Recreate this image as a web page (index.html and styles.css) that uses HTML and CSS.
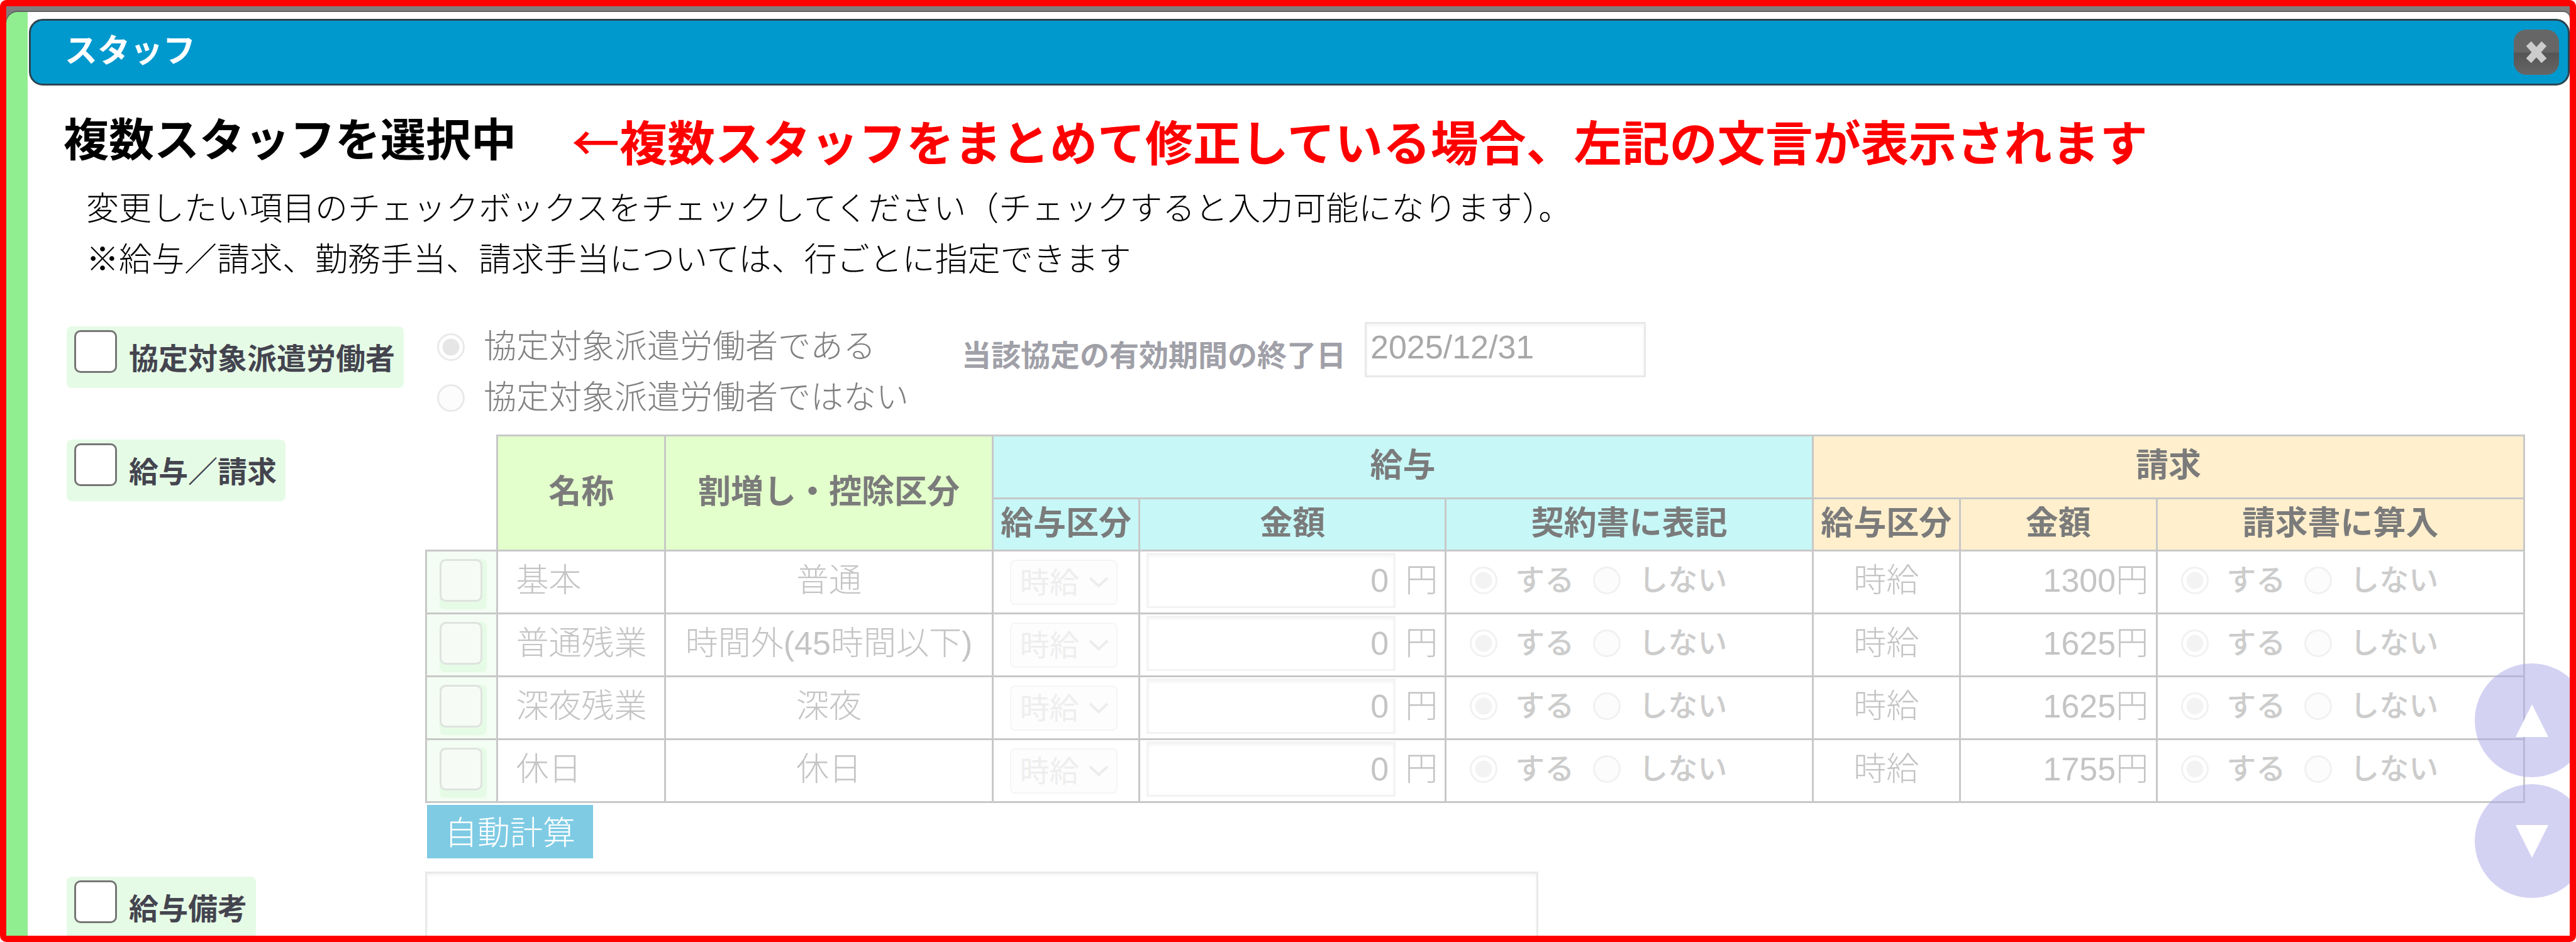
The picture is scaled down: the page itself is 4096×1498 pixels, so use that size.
FILE: index.html
```html
<!DOCTYPE html>
<html lang="ja">
<head>
    <meta charset="UTF-8">
    <title>スタッフ</title>
    <link rel="stylesheet" href="styles.css">
</head>
<body>
    <div class="frame">
        <main class="dialog">
            <header class="title-bar">
                <h1>スタッフ</h1>
                <button type="button" class="close-button" aria-label="閉じる">
                    <svg viewBox="0 0 36 36"><path d="M8 7 L28 29 M28 7 L8 29"/></svg>
                </button>
            </header>

            <div class="heading">
                <h2>複数スタッフを選択中</h2>
                <p class="annotation"><span class="arrow">←</span>複数スタッフをまとめて修正している場合、左記の文言が表示されます</p>
            </div>
            <div class="description">
                <p>変更したい項目のチェックボックスをチェックしてください（チェックすると入力可能になります）。</p>
                <p>※給与／請求、勤務手当、請求手当については、行ごとに指定できます</p>
            </div>

            <form class="staff-form">
                <div class="form-row">
                    <div class="form-head">
                        <label class="item-label"><input type="checkbox" class="check">協定対象派遣労働者</label>
                    </div>
                    <div class="form-body agreement">
                        <div class="radio-list">
                            <label><input type="radio" class="radio" name="agreement" checked disabled>協定対象派遣労働者である</label>
                            <label><input type="radio" class="radio" name="agreement" disabled>協定対象派遣労働者ではない</label>
                        </div>
                        <div class="date-field">
                            <label for="endDate">当該協定の有効期間の終了日</label>
                            <input type="text" id="endDate" class="text-box" value="2025/12/31" disabled>
                        </div>
                    </div>
                </div>

                <div class="form-row">
                    <div class="form-head">
                        <label class="item-label"><input type="checkbox" class="check">給与／請求</label>
                    </div>
                    <div class="form-body">
                        <table class="pay-table">
                            <colgroup>
                                <col class="col-check">
                                <col class="col-name">
                                <col class="col-kind">
                                <col class="col-unit">
                                <col class="col-pay">
                                <col class="col-option">
                                <col class="col-unit">
                                <col class="col-bill">
                                <col class="col-option">
                            </colgroup>
                            <thead>
                                <tr>
                                    <td class="blank" rowspan="2"></td>
                                    <th class="green" rowspan="2">名称</th>
                                    <th class="green" rowspan="2">割増し・控除区分</th>
                                    <th class="blue" colspan="3">給与</th>
                                    <th class="orange" colspan="3">請求</th>
                                </tr>
                                <tr>
                                    <th class="blue">給与区分</th>
                                    <th class="blue">金額</th>
                                    <th class="blue">契約書に表記</th>
                                    <th class="orange">給与区分</th>
                                    <th class="orange">金額</th>
                                    <th class="orange">請求書に算入</th>
                                </tr>
                            </thead>
                            <tbody>
                                <tr>
                                    <td class="row-check"><label><input type="checkbox" class="check" aria-label="基本" disabled></label></td>
                                    <td class="name">基本</td>
                                    <td class="kind">普通</td>
                                    <td class="unit"><select aria-label="給与区分" disabled><option>時給</option></select></td>
                                    <td><div class="amount"><input type="text" class="text-box" aria-label="金額" value="0" disabled>円</div></td>
                                    <td><div class="options">
                                        <label><input type="radio" class="radio" name="pay1" checked disabled>する</label>
                                        <label><input type="radio" class="radio" name="pay1" disabled>しない</label>
                                    </div></td>
                                    <td class="unit">時給</td>
                                    <td class="price">1300円</td>
                                    <td><div class="options">
                                        <label><input type="radio" class="radio" name="bill1" checked disabled>する</label>
                                        <label><input type="radio" class="radio" name="bill1" disabled>しない</label>
                                    </div></td>
                                </tr>
                                <tr>
                                    <td class="row-check"><label><input type="checkbox" class="check" aria-label="普通残業" disabled></label></td>
                                    <td class="name">普通残業</td>
                                    <td class="kind">時間外(45時間以下)</td>
                                    <td class="unit"><select aria-label="給与区分" disabled><option>時給</option></select></td>
                                    <td><div class="amount"><input type="text" class="text-box" aria-label="金額" value="0" disabled>円</div></td>
                                    <td><div class="options">
                                        <label><input type="radio" class="radio" name="pay2" checked disabled>する</label>
                                        <label><input type="radio" class="radio" name="pay2" disabled>しない</label>
                                    </div></td>
                                    <td class="unit">時給</td>
                                    <td class="price">1625円</td>
                                    <td><div class="options">
                                        <label><input type="radio" class="radio" name="bill2" checked disabled>する</label>
                                        <label><input type="radio" class="radio" name="bill2" disabled>しない</label>
                                    </div></td>
                                </tr>
                                <tr>
                                    <td class="row-check"><label><input type="checkbox" class="check" aria-label="深夜残業" disabled></label></td>
                                    <td class="name">深夜残業</td>
                                    <td class="kind">深夜</td>
                                    <td class="unit"><select aria-label="給与区分" disabled><option>時給</option></select></td>
                                    <td><div class="amount"><input type="text" class="text-box" aria-label="金額" value="0" disabled>円</div></td>
                                    <td><div class="options">
                                        <label><input type="radio" class="radio" name="pay3" checked disabled>する</label>
                                        <label><input type="radio" class="radio" name="pay3" disabled>しない</label>
                                    </div></td>
                                    <td class="unit">時給</td>
                                    <td class="price">1625円</td>
                                    <td><div class="options">
                                        <label><input type="radio" class="radio" name="bill3" checked disabled>する</label>
                                        <label><input type="radio" class="radio" name="bill3" disabled>しない</label>
                                    </div></td>
                                </tr>
                                <tr>
                                    <td class="row-check"><label><input type="checkbox" class="check" aria-label="休日" disabled></label></td>
                                    <td class="name">休日</td>
                                    <td class="kind">休日</td>
                                    <td class="unit"><select aria-label="給与区分" disabled><option>時給</option></select></td>
                                    <td><div class="amount"><input type="text" class="text-box" aria-label="金額" value="0" disabled>円</div></td>
                                    <td><div class="options">
                                        <label><input type="radio" class="radio" name="pay4" checked disabled>する</label>
                                        <label><input type="radio" class="radio" name="pay4" disabled>しない</label>
                                    </div></td>
                                    <td class="unit">時給</td>
                                    <td class="price">1755円</td>
                                    <td><div class="options">
                                        <label><input type="radio" class="radio" name="bill4" checked disabled>する</label>
                                        <label><input type="radio" class="radio" name="bill4" disabled>しない</label>
                                    </div></td>
                                </tr>
                            </tbody>
                        </table>
                        <button type="button" class="calc-button" disabled>自動計算</button>
                    </div>
                </div>

                <div class="form-row">
                    <div class="form-head">
                        <label class="item-label"><input type="checkbox" class="check">給与備考</label>
                    </div>
                    <div class="form-body">
                        <textarea class="note" aria-label="給与備考" disabled></textarea>
                    </div>
                </div>
            </form>
        </main>

        <nav class="scroll-buttons">
            <button type="button" aria-label="上へ"><svg viewBox="0 0 52 52"><path d="M26 0 L52 52 H0 Z"/></svg></button>
            <button type="button" aria-label="下へ"><svg viewBox="0 0 52 52"><path d="M0 0 H52 L26 52 Z"/></svg></button>
        </nav>
    </div>
</body>
</html>
```

FILE: styles.css
```css
* {
    box-sizing: border-box;
}

body {
    margin: 0;
    background: white;
    font-family: "Liberation Sans", "Noto Sans CJK JP", sans-serif;
    font-size: 52px;
    font-weight: 300;
    color: black;
}

h1, h2, p {
    margin: 0;
}

button, input, select, textarea {
    font: inherit;
    margin: 0;
}

.frame {
    position: relative;
    height: 100vh;
    overflow: hidden;
    border: 10px solid red;
    border-radius: 10px;
    background: #7f7f7f;
    padding-top: 9px;
}

.dialog {
    min-height: 100%;
    padding: 11px 0 0 2px;
    border-left: 34px solid lightgreen;
    border-radius: 18px 10px 0 0;
    background: white;
    box-shadow: 0 -1px 2px #444;
}

/* title bar */

.title-bar {
    display: flex;
    justify-content: space-between;
    align-items: center;
    height: 106px;
    padding: 0 14px 0 54px;
    border: 3px solid #2c4450;
    border-radius: 22px;
    background: #0099ce;
}

.title-bar h1 {
    color: white;
    font-size: 52px;
    font-weight: bold;
    line-height: 80px;
    padding-bottom: 4px;
}

.close-button {
    display: flex;
    justify-content: center;
    align-items: center;
    width: 72px;
    height: 72px;
    padding: 0;
    border: none;
    border-radius: 20px;
    background: linear-gradient(#666 50%, #555 52%, #666);
}

.close-button svg {
    width: 44px;
    height: 44px;
    fill: none;
    stroke: #ccc;
    stroke-width: 9;
}

/* heading */

.heading {
    display: flex;
    align-items: center;
    gap: 88px;
    margin-top: 32px;
    padding-left: 55px;
    line-height: 110px;
}

.heading h2 {
    color: black;
    font-size: 72px;
    font-weight: bold;
}

.annotation {
    color: red;
    font-family: "Noto Sans CJK JP", sans-serif;
    font-size: 76px;
    font-weight: bold;
}

.arrow {
    font-weight: 500;
}

.description {
    margin-top: 14px;
    padding-left: 91px;
    line-height: 81px;
}

/* form */

.staff-form {
    display: flex;
    flex-direction: column;
    gap: 18px;
    margin-top: 57px;
    padding: 0 71px 0 60px;
}

.form-row {
    display: flex;
}

.form-head {
    flex: 0 0 570px;
    padding-top: 8px;
}

.form-body {
    flex: 1;
}

.item-label {
    display: inline-flex;
    gap: 19px;
    padding: 6px 14px 0 12px;
    border-radius: 8px;
    background: #e6fbe6;
    color: #44444f;
    font-size: 47px;
    font-weight: bold;
    line-height: 92px;
}

.check {
    appearance: none;
    width: 68px;
    height: 68px;
    border: 3px solid #767676;
    border-radius: 10px;
    background: white;
}

.radio {
    appearance: none;
    flex: none;
    width: 44px;
    height: 44px;
    border: 3px solid #e9e9e9;
    border-radius: 50%;
    background: #fcfcfc;
}

.radio:checked {
    background: radial-gradient(circle, #e6e6e6 13px, white 14px);
}

.text-box, .note {
    border: 3px solid #e9e9e9;
    border-radius: 0;
    background: white;
    box-shadow: inset 0 3px 5px #f4f4f4;
}

.agreement {
    display: flex;
    align-items: flex-start;
    gap: 84px;
}

.radio-list {
    padding-left: 19px;
    color: #808080;
    line-height: 81px;
}

.radio-list label {
    display: flex;
    align-items: center;
    gap: 30px;
}

.date-field {
    display: flex;
    align-items: center;
    gap: 30px;
}

.date-field label {
    padding-top: 20px;
    color: #a0a0a8;
    font-size: 47px;
    font-weight: bold;
    line-height: 70px;
}

.date-field .text-box {
    width: 447px;
    height: 88px;
    padding: 0 6px 8px;
    color: #a8a8a8;
}

/* pay table */

.pay-table {
    width: 100%;
    table-layout: fixed;
    border-collapse: collapse;
    color: #c4c4c4;
    line-height: 70px;
}

.col-check { width: 3.4%; }
.col-name { width: 8%; }
.col-kind { width: 15.6%; }
.col-unit { width: 7%; }
.col-pay { width: 14.6%; }
.col-option { width: 17.5%; }
.col-bill { width: 9.4%; }

.pay-table th,
.pay-table td {
    padding: 0 0 5px;
    border: 3px solid #c8c8c8;
}

.pay-table th {
    height: 83px;
    color: #7b7b7b;
    font-weight: bold;
}

.pay-table tr:first-child th[colspan] {
    height: 100px;
}

.pay-table tbody td {
    height: 100px;
}

.pay-table .blank {
    border-top: none;
    border-left: none;
}

.green { background: #e3ffcb; }
.blue { background: #c7f7f7; }
.orange { background: #ffefcd; }

.pay-table .row-check {
    padding: 6px 0 0 20px;
    background: #f3fdf3;
}

.row-check label {
    display: block;
    width: 75px;
    height: 80px;
    border-radius: 8px;
    background: #e6fbe6;
}

.row-check .check {
    display: block;
    border-color: #dfe3df;
    background: #f6fbf6;
}

.pay-table .name {
    padding-left: 28px;
}

.kind, .unit {
    text-align: center;
}

.unit select {
    appearance: none;
    display: block;
    width: 171px;
    height: 72px;
    margin: 6px 0 0 26px;
    padding: 0 14px;
    border: 2px solid #f5f5f5;
    border-radius: 8px;
    background: #fdfdfd url("data:image/svg+xml,%3Csvg xmlns='http://www.w3.org/2000/svg' width='32' height='18'%3E%3Cpath d='M2 2 L16 15 L30 2' fill='none' stroke='%23ececec' stroke-width='4'/%3E%3C/svg%3E") no-repeat right 12px center;
    color: #eee;
    opacity: 1;
    font-size: 47px;
    font-weight: normal;
}

.amount {
    display: flex;
    align-items: center;
    gap: 15px;
    padding-left: 10px;
}

.amount .text-box {
    width: 396px;
    height: 88px;
    padding: 0 8px;
    border-color: #f3f3f3;
    color: #c4c4c4;
    text-align: right;
}

.options {
    display: flex;
    gap: 30px;
    padding-left: 37px;
    color: #ccc;
    font-size: 47px;
    font-weight: 500;
}

.options label {
    display: flex;
    align-items: center;
    gap: 28px;
}

.options .radio {
    border-color: #f1f1f1;
}

.options .radio:checked {
    background: radial-gradient(circle, #f3f3f3 13px, white 14px);
}

.pay-table .price {
    padding-right: 12px;
    text-align: right;
}

.calc-button {
    display: block;
    height: 85px;
    margin: 3px 0 3px 3px;
    padding: 0 28px 4px;
    border: none;
    background: #7fcbe4;
    color: white;
}

.note {
    display: block;
    width: 53%;
    height: 200px;
    resize: none;
}

/* scroll buttons */

.scroll-buttons {
    position: absolute;
    right: -30px;
    bottom: 60px;
    display: flex;
    flex-direction: column;
    gap: 11px;
}

.scroll-buttons button {
    display: flex;
    justify-content: center;
    align-items: center;
    width: 181px;
    height: 181px;
    padding: 0;
    border: none;
    border-radius: 50%;
    background: rgba(170, 165, 231, 0.5);
}

.scroll-buttons svg {
    width: 52px;
    height: 52px;
    fill: white;
}
```
